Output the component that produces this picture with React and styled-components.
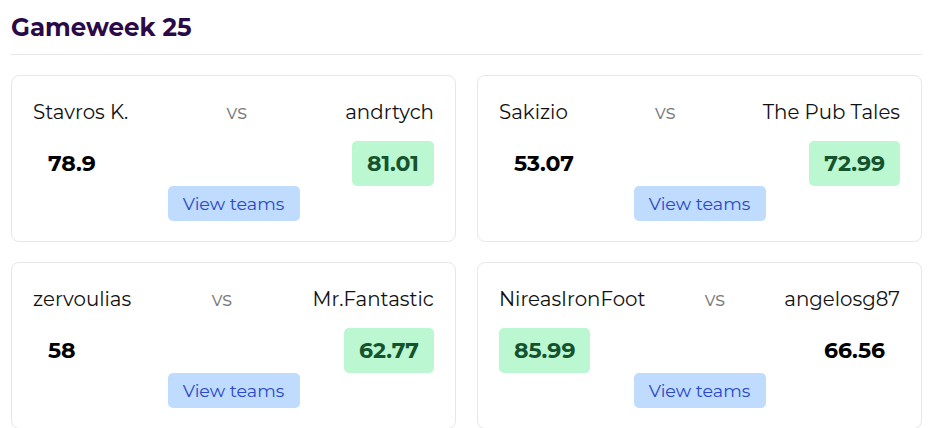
import React from "react";
import styled, { createGlobalStyle } from "styled-components";

const matches = [
  { home: "Stavros K.", away: "andrtych", homeScore: "78.9", awayScore: "81.01" },
  { home: "Sakizio", away: "The Pub Tales", homeScore: "53.07", awayScore: "72.99" },
  { home: "zervoulias", away: "Mr.Fantastic", homeScore: "58", awayScore: "62.77" },
  { home: "NireasIronFoot", away: "angelosg87", homeScore: "85.99", awayScore: "66.56" },
];

export default function App() {
  return (
    <Page>
      <GlobalStyle />
      <Title>Gameweek 25</Title>
      <Grid>
        {matches.map((m) => {
          const homeWins = parseFloat(m.homeScore) > parseFloat(m.awayScore);
          return (
            <Card key={m.home}>
              <NamesRow>
                <Name>{m.home}</Name>
                <Vs>vs</Vs>
                <Name>{m.away}</Name>
              </NamesRow>
              <ScoresRow>
                <Score $winner={homeWins}>{m.homeScore}</Score>
                <Score $winner={!homeWins}>{m.awayScore}</Score>
              </ScoresRow>
              <ViewButton>View teams</ViewButton>
            </Card>
          );
        })}
      </Grid>
    </Page>
  );
}

const GlobalStyle = createGlobalStyle`
  body {
    margin: 0;
    background: #ffffff;
    font-family: "Montserrat", "DejaVu Sans", sans-serif;
  }
`;

const Page = styled.div`
  padding: 10px 10px 0 11px;
`;

const Title = styled.h2`
  margin: 0 0 20px;
  padding: 2px 0 12px;
  font-size: 24.5px;
  line-height: 30px;
  font-weight: 700;
  color: #2b0a48;
  border-bottom: 1px solid #e5e7eb;
`;

const Grid = styled.div`
  display: grid;
  grid-template-columns: 1fr 1fr;
  gap: 20px 21px;
`;

const Card = styled.div`
  display: flex;
  flex-direction: column;
  padding: 24px 21px 20px;
  border: 1px solid #e5e7eb;
  border-radius: 8px;
`;

const NamesRow = styled.div`
  display: flex;
  justify-content: space-between;
  align-items: center;
  margin-bottom: 17px;
`;

const Name = styled.span`
  font-size: 19.8px;
  line-height: 24px;
  color: #111111;
`;

const Vs = styled.span`
  font-size: 19.8px;
  line-height: 24px;
  color: #7a7a7a;
`;

const ScoresRow = styled.div`
  display: flex;
  justify-content: space-between;
`;

const Score = styled.span`
  padding: 10px 15px;
  border-radius: 5px;
  font-size: 22px;
  line-height: 25px;
  font-weight: 700;
  color: ${(p) => (p.$winner ? "#14532d" : "#000000")};
  background: ${(p) => (p.$winner ? "#bbf7d0" : "transparent")};
`;

const ViewButton = styled.button`
  align-self: center;
  width: 132px;
  height: 35px;
  border: none;
  border-radius: 5px;
  background: #bfdbfe;
  color: #2a48c8;
  font-family: inherit;
  font-size: 17.5px;
  cursor: pointer;
`;
